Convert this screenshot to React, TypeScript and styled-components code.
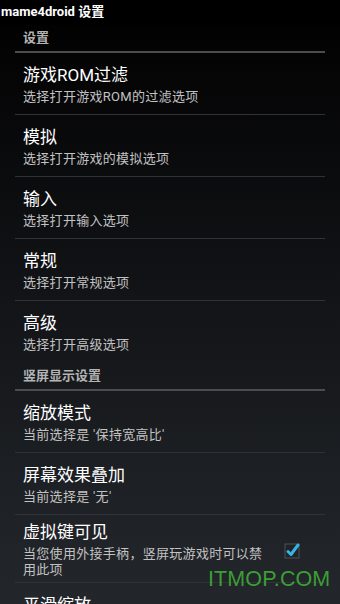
import React from 'react';
import styled, { createGlobalStyle } from 'styled-components';

const GlobalStyle = createGlobalStyle`
  html, body {
    margin: 0;
    padding: 0;
    background: #000;
  }
  body {
    font-family: Roboto, "Noto Sans CJK SC", sans-serif;
    -webkit-font-smoothing: antialiased;
  }
`;

const Screen = styled.div`
  position: relative;
  width: 340px;
  height: 604px;
  overflow: hidden;
  background: linear-gradient(180deg, #000 0%, #050506 12%, #121417 50%, #1d2024 80%, #23262b 100%);
`;

const TitleBar = styled.div`
  height: 25px;
  line-height: 24px;
  padding-left: 1px;
  color: #fff;
  font-size: 13px;
  font-weight: 700;
  background: #000;
`;

const List = styled.div`
  display: flex;
  flex-direction: column;
  padding: 0 15px;
`;

const Category = styled.div`
  height: 26px;
  line-height: 26px;
  padding-left: 8px;
  color: #b4b4b4;
  font-size: 13px;
  font-weight: 700;
  border-bottom: 2px solid #4a4c4f;
`;

const Item = styled.div<{ $compact?: boolean; $last?: boolean }>`
  display: flex;
  align-items: center;
  padding: ${({ $compact }) => ($compact ? '6px 0 4px 8px' : '11px 0 9px 8px')};
  border-bottom: 1px solid ${({ $last }) => ($last ? 'transparent' : '#2f3236')};
`;

const Texts = styled.div`
  flex: 1;
  display: flex;
  flex-direction: column;
  gap: 3px;
  padding-right: 3px;
`;

const ItemTitle = styled.div`
  color: #fff;
  font-size: 17px;
  line-height: 22px;
`;

const ItemSummary = styled.div`
  color: #c2c2c2;
  font-size: 13px;
  line-height: 16px;
  letter-spacing: 0.3px;
`;

const CheckWrap = styled.div`
  width: 40px;
  display: flex;
  justify-content: center;
  margin-right: 13px;
`;

const Watermark = styled.div`
  position: absolute;
  left: 208px;
  top: 566px;
  color: #3c9e35;
  font-family: "Liberation Sans", Arial, sans-serif;
  font-size: 21.5px;
  line-height: 26px;
  letter-spacing: 0.1px;
`;

function CheckIcon() {
  return (
    <svg width="20" height="20" viewBox="0 0 20 20">
      <rect x="3" y="4" width="14" height="14" fill="#202327" stroke="#4d5156" strokeWidth="1" />
      <path d="M6 11.5 L9 14.5 L16 5" fill="none" stroke="#33b5e5" strokeWidth="3" strokeLinecap="round" strokeLinejoin="round" />
    </svg>
  );
}

interface Pref {
  title: string;
  summary: string;
  checked?: boolean;
  compact?: boolean;
  last?: boolean;
}

const general: Pref[] = [
  { title: '游戏ROM过滤', summary: '选择打开游戏ROM的过滤选项' },
  { title: '模拟', summary: '选择打开游戏的模拟选项' },
  { title: '输入', summary: '选择打开输入选项' },
  { title: '常规', summary: '选择打开常规选项' },
  { title: '高级', summary: '选择打开高级选项', last: true },
];

const portrait: Pref[] = [
  { title: '缩放模式', summary: "当前选择是 '保持宽高比'" },
  { title: '屏幕效果叠加', summary: "当前选择是 '无'" },
  { title: '虚拟键可见', summary: '当您使用外接手柄，竖屏玩游戏时可以禁用此项', checked: true, compact: true },
  { title: '平滑缩放', summary: '使用平滑缩放' },
];

function PrefRow({ pref }: { pref: Pref }) {
  return (
    <Item $compact={pref.compact} $last={pref.last}>
      <Texts>
        <ItemTitle>{pref.title}</ItemTitle>
        <ItemSummary>{pref.summary}</ItemSummary>
      </Texts>
      {pref.checked !== undefined && (
        <CheckWrap>
          <CheckIcon />
        </CheckWrap>
      )}
    </Item>
  );
}

export default function App() {
  return (
    <>
      <GlobalStyle />
      <Screen>
        <TitleBar>mame4droid 设置</TitleBar>
        <List>
          <Category>设置</Category>
          {general.map(p => (
            <PrefRow key={p.title} pref={p} />
          ))}
          <Category>竖屏显示设置</Category>
          {portrait.map(p => (
            <PrefRow key={p.title} pref={p} />
          ))}
        </List>
        <Watermark>ITMOP.COM</Watermark>
      </Screen>
    </>
  );
}
